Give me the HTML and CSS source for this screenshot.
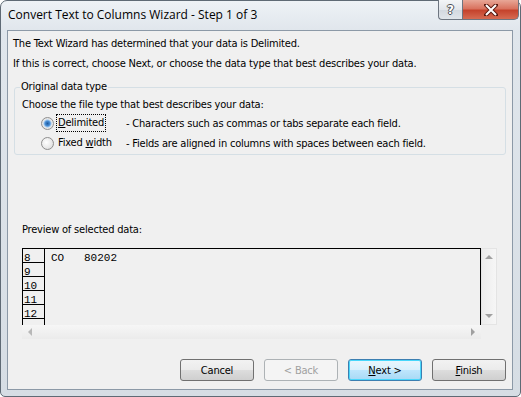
FILE: index.html
```html
<!DOCTYPE html>
<html lang="en">
<head>
    <meta charset="UTF-8">
    <title>Convert Text to Columns Wizard - Step 1 of 3</title>
    <link rel="stylesheet" href="styles.css">
</head>
<body>
    <div class="window">
        <div class="titlebar">
            <span class="title">Convert Text to Columns Wizard - Step 1 of 3</span>
            <div class="caption-buttons">
                <div class="cap-btn help">?</div>
                <div class="cap-btn close">
                    <svg width="14" height="12" viewBox="0 0 14 12">
                        <path d="M2 1 L12 11 M12 1 L2 11" stroke="#5a1a10" stroke-width="4" stroke-linecap="square" />
                        <path d="M2 1 L12 11 M12 1 L2 11" stroke="#ffffff" stroke-width="2" />
                    </svg>
                </div>
            </div>
        </div>

        <div class="client">
            <p class="intro">The Text Wizard has determined that your data is Delimited.</p>
            <p class="intro">If this is correct, choose Next, or choose the data type that best describes your data.</p>

            <fieldset class="group">
                <legend>Original data type</legend>
                <p class="group-label">Choose the file type that best describes your data:</p>
                <div class="option">
                    <span class="radio checked"></span>
                    <span class="option-name"><span class="focused"><u>D</u>elimited</span></span>
                    <span class="option-desc">- Characters such as commas or tabs separate each field.</span>
                </div>
                <div class="option">
                    <span class="radio"></span>
                    <span class="option-name">Fixed <u>w</u>idth</span>
                    <span class="option-desc">- Fields are aligned in columns with spaces between each field.</span>
                </div>
            </fieldset>

            <p class="preview-label">Preview of selected data:</p>
            <div class="preview">
                <div class="preview-data">
                    <div class="row"><span class="num">8</span><span class="cell">CO   80202</span></div>
                    <div class="row"><span class="num">9</span><span class="cell"></span></div>
                    <div class="row"><span class="num">10</span><span class="cell"></span></div>
                    <div class="row"><span class="num">11</span><span class="cell"></span></div>
                    <div class="row"><span class="num">12</span><span class="cell"></span></div>
                    <div class="row"><span class="num"></span><span class="cell"></span></div>
                </div>
                <div class="vscroll">
                    <span class="arrow up"></span>
                    <span class="arrow down"></span>
                </div>
                <div class="hscroll">
                    <span class="arrow left"></span>
                    <span class="arrow right"></span>
                </div>
                <div class="corner"></div>
            </div>

            <div class="buttons">
                <button class="btn">Cancel</button>
                <button class="btn" disabled>&lt; Back</button>
                <button class="btn default"><u>N</u>ext &gt;</button>
                <button class="btn"><u>F</u>inish</button>
            </div>
        </div>
    </div>
</body>
</html>
```

FILE: styles.css
```css
body {
    margin: 0;
    background-color: #ffffff;
    font-family: "DejaVu Sans Condensed", "DejaVu Sans", sans-serif;
    font-size: 11px;
    letter-spacing: -0.2px;
    color: #000000;
}

.window {
    width: 521px;
    height: 397px;
    box-sizing: border-box;
    border: 1px solid #5f6a75;
    border-radius: 7px 7px 5px 5px;
    background: linear-gradient(to bottom, #eef2f6 0px, #e0e6ec 30px, #d6dde4 100%);
    padding: 0 7px 6px 6px;
    display: flex;
    flex-direction: column;
}

.titlebar {
    height: 29px;
    flex: none;
    display: flex;
    justify-content: space-between;
    align-items: flex-start;
}

.title {
    font-family: "Open Sans", sans-serif;
    font-size: 12px;
    letter-spacing: 0;
    color: #000000;
    padding: 5px 0 0 1px;
}

.caption-buttons {
    flex: none;
    display: flex;
    margin: -1px -6px 0 0;
}

.cap-btn {
    flex: none;
    height: 19px;
    display: flex;
    align-items: center;
    justify-content: center;
    border: 1px solid #6d7580;
    border-top: none;
}

.help {
    width: 23px;
    border-right: none;
    border-radius: 0 0 0 4px;
    background: linear-gradient(to bottom, #f3f5f7 0%, #e2e6eb 50%, #d2d8df 51%, #e0e5ea 100%);
    font-family: "DejaVu Sans", sans-serif;
    font-weight: bold;
    font-size: 12px;
    letter-spacing: 0;
    color: #ffffff;
    text-shadow: 1px 0 0 #4a4f55, -1px 0 0 #4a4f55, 0 1px 0 #4a4f55, 0 -1px 0 #4a4f55;
}

.close {
    width: 55px;
    border-radius: 0 0 5px 0;
    background: linear-gradient(to bottom, #e8a797 0%, #d9735f 45%, #c5432c 55%, #d66b52 100%);
}

.client {
    flex-grow: 1;
    background-color: #f0f0f0;
    border: 1px solid #8c99a7;
    padding: 5px 6px 0 5px;
}

.intro {
    margin: 0 0 4px 0;
    line-height: 16px;
}

.group {
    margin: 8px 0 0 1px;
    padding: 3px 7px 1px 7px;
    border: 1px solid #d5dfe5;
    border-radius: 3px;
}

.group legend {
    padding: 0 1px;
    margin-left: -2px;
    line-height: 14px;
}

.group-label {
    margin: 0;
    line-height: 16px;
}

.option {
    display: flex;
    align-items: center;
    height: 20px;
}

.radio {
    flex: none;
    width: 11px;
    height: 11px;
    border: 1px solid #8f8f8f;
    border-radius: 50%;
    background: radial-gradient(circle at 40% 40%, #ffffff 0%, #e8e8e8 60%, #d0d0d0 100%);
    margin: 0 4px 0 19px;
}

.radio.checked {
    background: radial-gradient(circle, #1e5a9e 0px, #4a8fd6 2.5px, #9cc6ee 3.5px, #e8e8e8 4.5px, #d8d8d8 100%);
}

.option-name {
    flex: none;
    width: 68px;
    line-height: 14px;
}

.focused {
    display: inline-block;
    margin-left: -1px;
    padding: 1px 1px 1px 1px;
    outline: 1px dotted #000000;
}

.option-desc {
    white-space: nowrap;
}

.preview-label {
    margin: 67px 0 0 9px;
    line-height: 16px;
}

.preview {
    margin: 10px 0 0 9px;
    display: grid;
    grid-template-columns: 459px 16px;
    grid-template-rows: 77px 14px;
}

.preview-data {
    border: 1px solid #000000;
    border-bottom: none;
    overflow: hidden;
    font-family: "Liberation Mono", monospace;
    font-size: 11px;
    letter-spacing: 0;
}

.row {
    display: flex;
    height: 14px;
    overflow: hidden;
}

.num {
    flex: none;
    box-sizing: border-box;
    width: 22px;
    height: 14px;
    border-right: 1px solid #000000;
    border-bottom: 1px solid #000000;
    padding-left: 1px;
    line-height: 18px;
}

.cell {
    padding-left: 6px;
    line-height: 18px;
    white-space: pre;
}

.vscroll {
    background: linear-gradient(to right, #ececec, #f6f6f6);
    border: 1px solid #e4e4e4;
    display: flex;
    flex-direction: column;
    justify-content: space-between;
    align-items: center;
    padding: 6px 0 6px 0;
}

.hscroll {
    background: linear-gradient(to bottom, #f6f6f6, #ebebeb);
    display: flex;
    justify-content: space-between;
    align-items: center;
    padding: 0 6px 0 6px;
}

.arrow {
    width: 0;
    height: 0;
}

.arrow.up {
    border-left: 4px solid transparent;
    border-right: 4px solid transparent;
    border-bottom: 4px solid #a0a0a0;
}

.arrow.down {
    border-left: 4px solid transparent;
    border-right: 4px solid transparent;
    border-top: 4px solid #a0a0a0;
}

.arrow.left {
    border-top: 4px solid transparent;
    border-bottom: 4px solid transparent;
    border-right: 4px solid #b8b8b8;
}

.arrow.right {
    border-top: 4px solid transparent;
    border-bottom: 4px solid transparent;
    border-left: 4px solid #a0a0a0;
}

.buttons {
    display: flex;
    justify-content: flex-end;
    gap: 10px;
    margin: 20px 0 0 0;
}

.btn {
    width: 74px;
    height: 22px;
    border: 1px solid #707070;
    border-radius: 3px;
    background: linear-gradient(to bottom, #f2f2f2 0%, #ebebeb 49%, #dddddd 50%, #cfcfcf 100%);
    font-family: "DejaVu Sans Condensed", "DejaVu Sans", sans-serif;
    font-size: 11px;
    letter-spacing: -0.2px;
    color: #000000;
    padding: 0;
}

.btn:disabled {
    color: #a0a0a0;
    border-color: #adb2b5;
    background: #f4f4f4;
}

.btn.default {
    border-color: #3c7fb1;
    box-shadow: inset 0 0 0 1px #48d7fb;
    background: linear-gradient(to bottom, #eaf6fd 0%, #d9f0fc 49%, #bee6fd 50%, #a7d9f5 100%);
}
```
